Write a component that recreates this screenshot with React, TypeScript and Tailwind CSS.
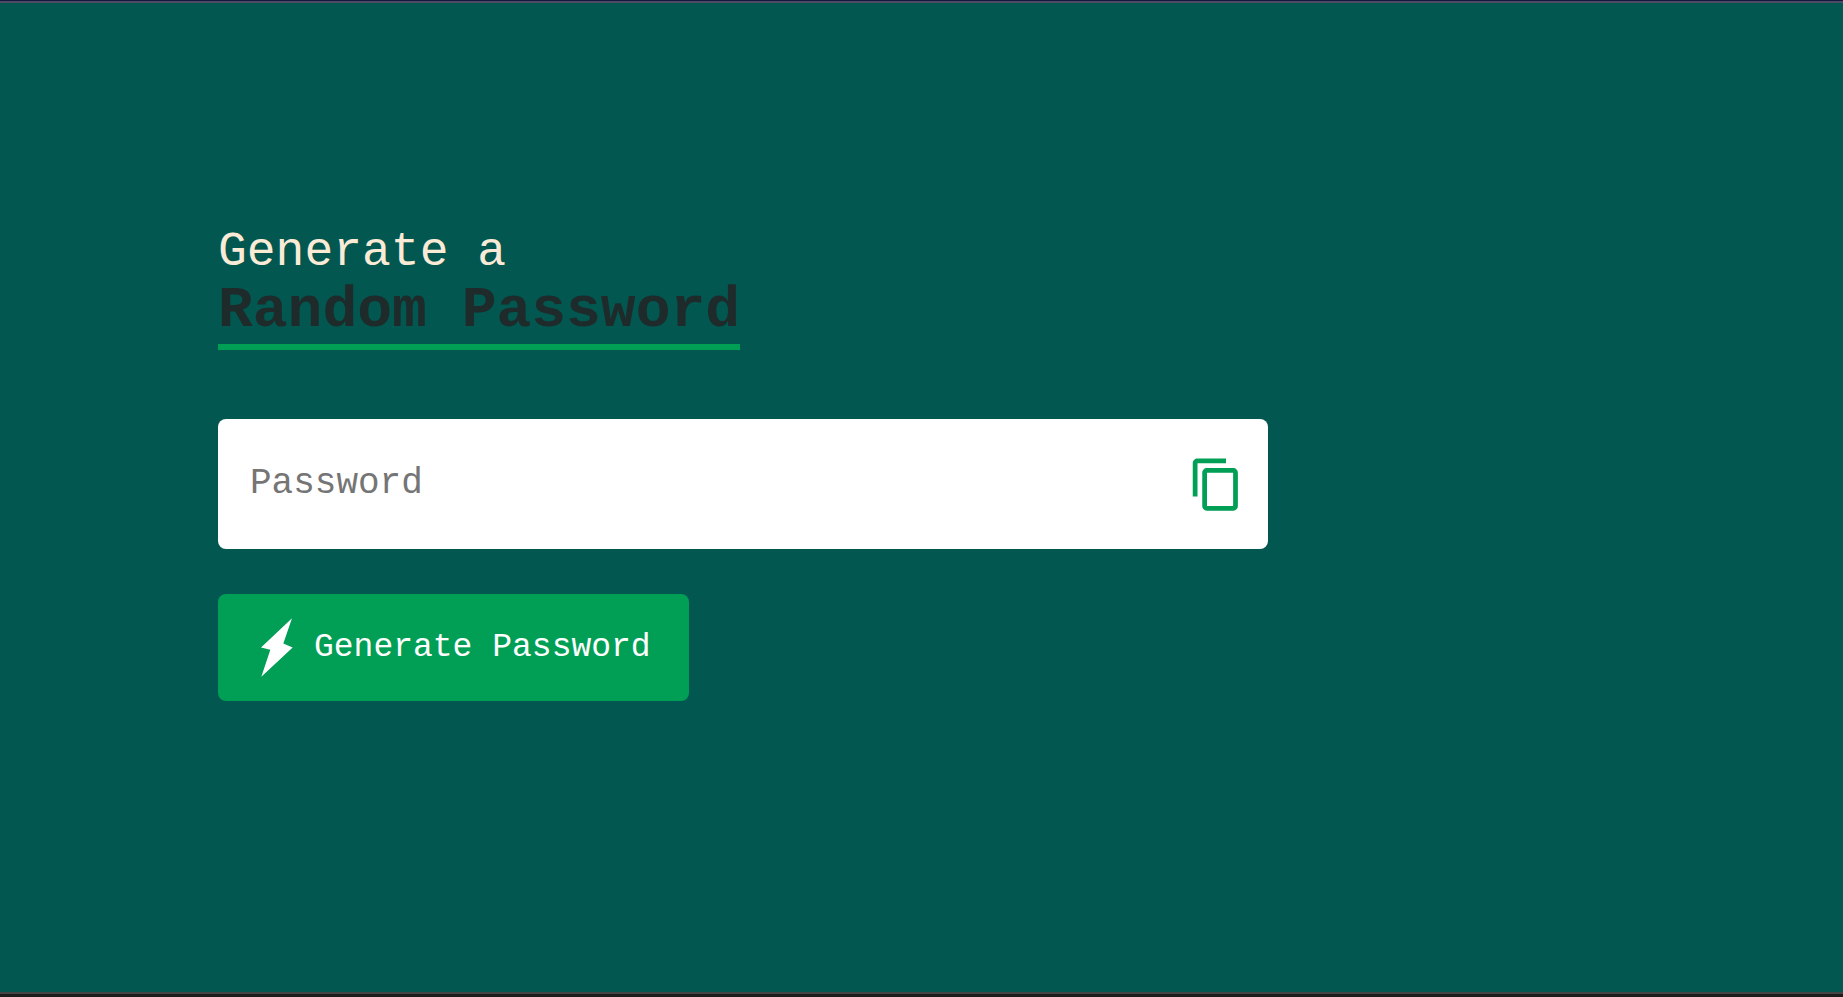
import { useState } from "react";

const CHARS =
  "ABCDEFGHIJKLMNOPQRSTUVWXYZabcdefghijklmnopqrstuvwxyz0123456789@#$%&*()_+-=<>?";

function createPassword(length: number): string {
  return Array.from({ length }, () => CHARS[Math.floor(Math.random() * CHARS.length)]).join("");
}

function CopyIcon() {
  return (
    <svg viewBox="0 0 24 24" className="size-[57px]" fill="currentColor" aria-hidden="true">
      <path d="M16 1H4c-1.1 0-2 .9-2 2v14h2V3h12V1zm3 4H8c-1.1 0-2 .9-2 2v14c0 1.1.9 2 2 2h11c1.1 0 2-.9 2-2V7c0-1.1-.9-2-2-2zm0 16H8V7h11v14z" />
    </svg>
  );
}

function BoltIcon() {
  return (
    <svg viewBox="0 0 96 176" className="h-[59px] w-8" fill="currentColor" aria-hidden="true">
      <path d="M93 0 67 76l28 12L1 176 28 95 0 88z" />
    </svg>
  );
}

export default function App() {
  const [password, setPassword] = useState("");

  return (
    <div className="flex min-h-screen flex-col border-t border-b-3 border-t-[#12173b] border-b-[#1c1c1c] bg-[#025750] font-['Liberation_Mono','Courier_New',monospace]">
      <main className="flex grow flex-col items-start border-y-2 border-t-[#4c4b65] border-b-[#444444] px-[218px] pt-[221px]">
        <h1 className="text-5xl leading-[56px] text-[#faebd7]">
          <span className="block">Generate a</span>
          <span className="block border-b-6 border-[#019f55] pb-[3px] text-[58px] leading-[61px] font-bold text-[#1f2a2a]">
            Random Password
          </span>
        </h1>

        <div className="mt-[69px] flex h-[130px] w-full max-w-[1050px] items-center rounded-lg bg-white pr-[23px] pl-8">
          <input
            type="text"
            aria-label="Password"
            placeholder="Password"
            value={password}
            onChange={(event) => setPassword(event.target.value)}
            className="min-w-0 grow bg-transparent text-4xl text-[#222222] outline-none placeholder:text-[#757575]"
          />
          <button
            type="button"
            aria-label="Copy password"
            onClick={() => navigator.clipboard?.writeText(password)}
            className="cursor-pointer text-[#019f55]"
          >
            <CopyIcon />
          </button>
        </div>

        <button
          type="button"
          onClick={() => setPassword(createPassword(12))}
          className="mt-[45px] flex h-[107px] cursor-pointer items-center gap-[21px] rounded-lg bg-[#019f55] pr-[38px] pl-[43px] text-[33px] whitespace-nowrap text-white"
        >
          <BoltIcon />
          Generate Password
        </button>
      </main>
    </div>
  );
}
